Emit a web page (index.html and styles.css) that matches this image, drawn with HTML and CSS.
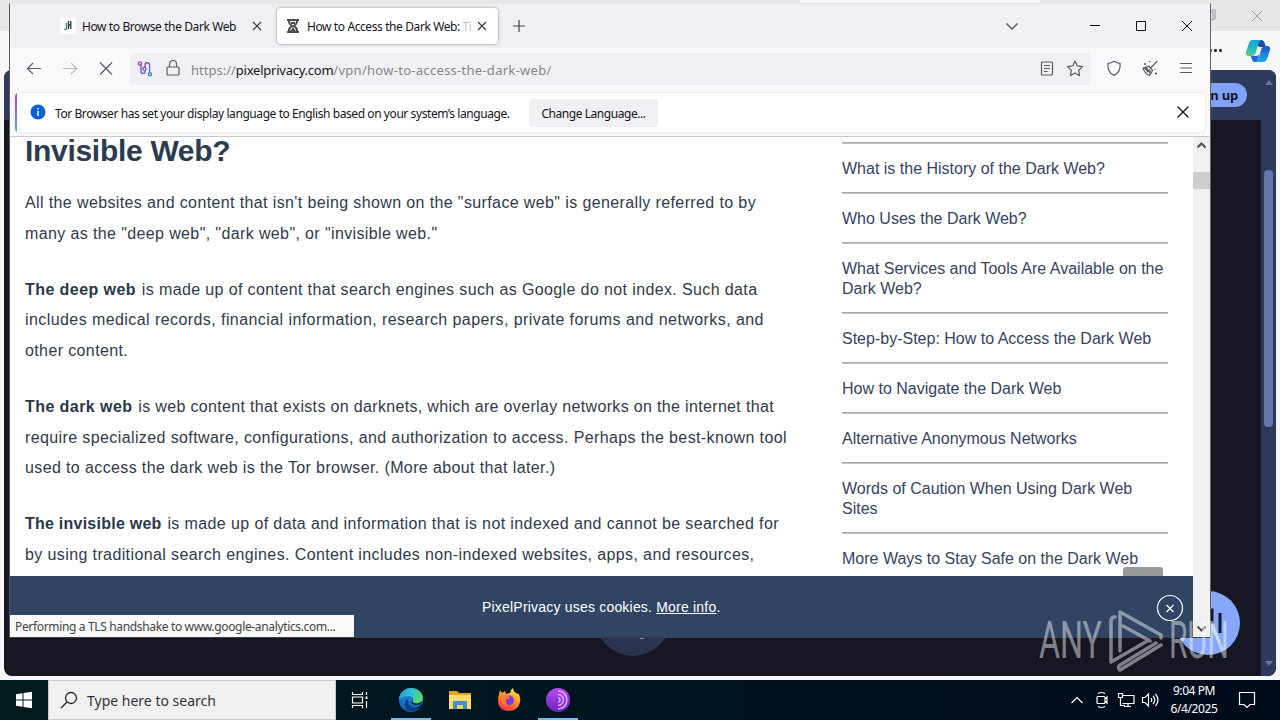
FILE: index.html
```html
<!DOCTYPE html>
<html lang="en">
<head>
<meta charset="utf-8">
<title>How to Access the Dark Web</title>
<link rel="stylesheet" href="styles.css">
</head>
<body>
<div class="desktop">
  <section class="edge">
    <div class="edge-title">
      <div class="edge-tab"></div>
      <svg class="edge-controls" width="70" height="31" viewBox="0 0 70 31" fill="none" stroke="#999"><path d="M1 12h7v8H1zM3 12v-2h7v9H8M47 11l10 10M57 11l-10 10"/></svg>
    </div>
    <div class="edge-tools">
      <span class="dots"></span>
      <svg width="26" height="26" viewBox="0 0 26 26">
        <defs>
          <linearGradient id="cp1" x1="0" y1="0" x2="0" y2="1"><stop offset="0" stop-color="#16a5e0"/><stop offset=".5" stop-color="#1fb9c8"/><stop offset="1" stop-color="#55cd78"/></linearGradient>
          <linearGradient id="cp2" x1="0" y1="0" x2="0" y2="1"><stop offset="0" stop-color="#2057c8"/><stop offset="1" stop-color="#19aaf0"/></linearGradient>
        </defs>
        <path d="M9 2h7q3 0 4 4l1 3h-7l-3-4z" fill="#1b4aa8"/>
        <path d="M8 2h8q-2 1-3 5l-2 7q-1 4-4 4H4q-4 0-3-4l3-9q1-3 4-3z" fill="url(#cp1)"/>
        <path d="M18 24h-8q3-1 4-5l2-7q1-4 4-4h2q4 0 3 4l-3 9q-1 3-4 3z" fill="url(#cp2)"/>
        <path d="M6 18h5l3-1q-1 7-4 7-3 0-4-6z" fill="#1769d8"/>
      </svg>
    </div>
    <div class="edge-page">
      <div class="edge-header"><span class="signup">Sign up</span></div>
      <div class="edge-scroll"><i class="tri up"></i><i class="thumb"></i><i class="tri down"></i></div>
      <div class="orb"></div>
      <div class="chat">
        <svg width="64" height="64" viewBox="0 0 64 64" fill="none" stroke="#151726" stroke-width="3"><path d="M31 19h5v12h-5M44 22v20"/><path d="M35 34l9 18" stroke="#a8c0fb"/></svg>
      </div>
    </div>
  </section>

  <section class="tor">
    <div class="tabs">
      <div class="tab">
        <svg class="fav" width="16" height="16" viewBox="0 0 16 16" fill="none"><rect width="16" height="16" fill="#fff"/><path d="M6.500 5v5q0 2-2 1" stroke="#3da06a" stroke-width="1.600"/><path d="M8.500 3v8M10.800 3v8M8 7h3" stroke="#28344a" stroke-width="1.300"/></svg>
        <span class="label">How to Browse the Dark Web</span>
        <svg class="x" width="10" height="10" viewBox="0 0 10 10"><path d="M1 1l8 8M9 1L1 9"/></svg>
      </div>
      <div class="tab active">
        <svg class="fav" width="14" height="16" viewBox="0 0 14 16" fill="none" stroke="#4b4b4f" stroke-width="2"><path d="M1 2h12M1 14h12M3 2v2q0 2 3 4-3 2-3 4v2M11 2v2q0 2-3 4 3 2 3 4v2"/><path d="M4.500 12.500h5M7 9.500v3M5 5h4"/></svg>
        <span class="label">How to Access the Dark Web: <em>Ti</em></span>
        <svg class="x" width="10" height="10" viewBox="0 0 10 10"><path d="M1 1l8 8M9 1L1 9"/></svg>
      </div>
      <svg class="plus" width="14" height="14" viewBox="0 0 14 14"><path d="M7 1v12M1 7h12"/></svg>
      <div class="win">
        <svg width="12" height="12" viewBox="0 0 12 12"><path d="M.5 3.500L6 9l5.500-5.500"/></svg>
        <svg width="12" height="12" viewBox="0 0 12 12"><path d="M1 5.500h10"/></svg>
        <svg width="12" height="12" viewBox="0 0 12 12"><path d="M1.500 1.500h9v9h-9z"/></svg>
        <svg width="12" height="12" viewBox="0 0 12 12"><path d="M1 1l10 10M11 1L1 11"/></svg>
      </div>
    </div>

    <div class="toolbar">
      <div class="nav">
        <svg width="16" height="16" viewBox="0 0 16 16"><path d="M15 7.500H2M7 2L1.500 7.500 7 13"/></svg>
        <svg class="off" width="16" height="16" viewBox="0 0 16 16"><path d="M1 7.500h13M9 2l5.500 5.500L9 13"/></svg>
        <svg width="16" height="16" viewBox="0 0 16 16"><path d="M2 1.500l12 12M14 1.500l-12 12"/></svg>
      </div>
      <div class="url">
        <svg width="16" height="16" viewBox="0 0 16 16">
          <defs><linearGradient id="circuit" gradientUnits="userSpaceOnUse" x1="2" y1="1" x2="14" y2="15"><stop offset="0" stop-color="#a83cd0"/><stop offset=".55" stop-color="#6a5cc8"/><stop offset="1" stop-color="#3a8fd0"/></linearGradient></defs>
          <g stroke="url(#circuit)" stroke-width="1.400"><path d="M4 4v6.500a2 2 0 0 0 4 0V9.500M8 6V4a2.300 2.300 0 0 1 4.600 0v8"/><circle cx="3" cy="2.500" r="1.600"/><circle cx="7.500" cy="7.800" r="1.600"/><circle cx="13" cy="13.300" r="1.600"/></g>
        </svg>
        <svg class="lock" width="14" height="18" viewBox="0 0 14 18"><path d="M2 8h10q1 0 1 1v6q0 1-1 1H2q-1 0-1-1V9q0-1 1-1zM3.500 8V5a3.500 3.500 0 0 1 7 0v3"/></svg>
        <span class="address"><span class="proto">https://</span><b>pixelprivacy.com</b><span class="path">/vpn/how-to-access-the-dark-web/</span></span>
        <svg class="reader" width="14" height="16" viewBox="0 0 14 16"><path d="M2.500 1h9q1 0 1 1v11q0 1-1 1h-9q-1 0-1-1V2q0-1 1-1zM4 4.500h6M4 7.500h6M4 10.500h3.500"/></svg>
        <svg class="star" width="18" height="18" viewBox="0 0 18 18"><path stroke-linejoin="round" d="M9 1l2.300 4.900 5.200.7-3.800 3.700.9 5.400L9 13.100l-4.600 2.600.9-5.400L1.500 6.600l5.200-.7z"/></svg>
      </div>
      <svg class="shield" width="16" height="18" viewBox="0 0 16 18"><path d="M8 1.200q3 1.800 6 2.200c.7 5-1.300 9.800-6 12-4.700-2.200-6.700-7-6-12q3-.4 6-2.200z"/></svg>
      <svg class="broom" width="16" height="16" viewBox="0 0 16 16"><path d="M15.500 0L9 6.500M6.500 5l4 4M6.500 5Q4.500 7 1 7 2 12 7.500 14.500q2.500-2.500 3-5.500M3.500 8.500l2-1M5 11l3-2.500M7.500 12.500l1-3"/><path d="M4 5.500l3 4 2 3-4-2-3-3z" fill="#5b5b66" stroke="none"/><path d="M2 3h2M3 2v2M7 .7h1.500M13 12.500h2M14 11.500v2M12.500 8.500h1"/></svg>
      <svg class="menu" width="14" height="14" viewBox="0 0 14 14"><path d="M1 1.500h12M1 6h12M1 10.500h12"/></svg>
    </div>

    <div class="notice-wrap">
      <div class="notice">
        <svg class="info" width="16" height="16" viewBox="0 0 16 16"><circle cx="8" cy="8" r="7.500" fill="#0560df"/><path d="M8 4v1.600M8 7v5" stroke="#fff" stroke-width="1.500"/></svg>
        <span class="message">Tor Browser has set your display language to English based on your system’s language.</span>
        <span class="button">Change Language...</span>
        <svg class="close" width="12" height="12" viewBox="0 0 12 12" stroke="#111" stroke-width="1.300"><path d="M.5.500l11 11M11.500.500l-11 11"/></svg>
      </div>
    </div>

    <div class="content">
      <article>
        <h2>Invisible Web?</h2>
        <p>All the websites and content that isn't being shown on the "surface web" is generally referred to by<br>many as the "deep web", "dark web", or "invisible web."</p>
        <p><strong>The deep web</strong> is made up of content that search engines such as Google do not index. Such data<br><span class="wide">includes medical records, financial information, research papers, private forums and networks, and</span><br>other content.</p>
        <p><strong>The dark web</strong> <span class="narrow">is web content that exists on darknets, which are overlay networks on the internet that</span><br><span class="mid">require specialized software, configurations, and authorization to access. Perhaps the best-known tool</span><br>used to access the dark web is the Tor browser. (More about that later.)</p>
        <p><strong class="tight">The invisible web</strong> <span class="mid">is made up of data and information that is not indexed and cannot be searched for<br>by using traditional search engines. Content includes non-indexed websites, apps, and resources,</span></p>
      </article>
      <ul class="toc">
        <li>What is the History of the Dark Web?</li>
        <li>Who Uses the Dark Web?</li>
        <li>What Services and Tools Are Available on the<br>Dark Web?</li>
        <li>Step-by-Step: How to Access the Dark Web</li>
        <li>How to Navigate the Dark Web</li>
        <li>Alternative Anonymous Networks</li>
        <li>Words of Caution When Using Dark Web<br>Sites</li>
        <li>More Ways to Stay Safe on the Dark Web</li>
      </ul>
      <div class="scrollbar">
        <svg width="17" height="16" viewBox="0 0 17 16"><path d="M4.500 10.500l4-4 4 4"/></svg>
        <i></i>
        <svg class="end" width="17" height="16" viewBox="0 0 17 16"><path d="M4.500 5.500l4 4 4-4"/></svg>
      </div>
      <div class="totop"></div>
      <div class="cookies">
        <span class="consent">PixelPrivacy uses cookies. <u>More info</u>.</span>
        <svg width="28" height="28" viewBox="0 0 28 28" fill="none" stroke="#fff" stroke-width="1.200"><circle cx="14" cy="14" r="12.500"/><path d="M10.500 11l7 7M17.500 11l-7 7"/></svg>
      </div>
      <div class="status">Performing a TLS handshake to www.google-analytics.com...</div>
    </div>
  </section>

  <div class="watermark">
    <span class="any">ANY</span>
    <svg width="56" height="64" viewBox="0 0 56 64" fill="none" stroke="#fff" stroke-width="3.500" stroke-linejoin="round" stroke-linecap="round"><path d="M7 8Q3 8 3 12V53L41 31M12 42V3L53 26M15 17L42 32M53 26v3M12 61L53 36M12 61q-3-3 0-5L48 34"/></svg>
    <span class="run">RUN</span>
  </div>

  <footer class="taskbar">
    <svg class="start" width="48" height="40" viewBox="0 0 48 40" fill="#fff"><path d="M16 14.200l6.500-1v6.300H16zM23.500 13l8.500-1.200v7.700h-8.500zM16 20.500h6.500v6.300l-6.500-1zM23.500 20.500H32v7.700L23.500 27z"/></svg>
    <div class="search">
      <svg width="18" height="18" viewBox="0 0 18 18" fill="none" stroke="#222" stroke-width="1.300"><circle cx="11" cy="7" r="5.500"/><path d="M7 11l-6 6"/></svg>
      <span>Type here to search</span>
    </div>
    <div class="apps">
      <div class="app"><svg width="18" height="18" viewBox="0 0 18 18" fill="none" stroke="#fff" stroke-width="1.200"><path d="M1.500 1v2.500h10V1M1.500 17v-2.500h10V17M1.500 6h10v6h-10zM15.500 1v3M15.500 10v7"/><path d="M14.500 5.500h2v2.500h-2z" fill="#fff" stroke="none"/></svg></div>
      <div class="app open">
        <svg width="24" height="24" viewBox="0 0 24 24">
          <defs>
            <linearGradient id="eg1" x1="0" y1="0" x2="1" y2=".4"><stop offset="0" stop-color="#1c9fe0"/><stop offset=".6" stop-color="#35c4cf"/><stop offset="1" stop-color="#5bd66a"/></linearGradient>
            <linearGradient id="eg2" x1="0" y1="0" x2="0" y2="1"><stop offset="0" stop-color="#1d9be0"/><stop offset="1" stop-color="#0b5cae"/></linearGradient>
          </defs>
          <circle cx="12" cy="12" r="12" fill="url(#eg2)"/>
          <path d="M0 11C1 4 6 0 12 0c7 0 12 5 12 10 0 4-3 6-6 6-4 0-5-2-4-3 1-2 0-5-4-5-4 0-8 1-10 3z" fill="url(#eg1)"/>
          <path d="M9 11c-1 5 3 9 8 9 2 0 3 0 5-1-5 7-17 5-16-3 0-3 1-4 3-5z" fill="#123f86"/>
          <path d="M24 12c-1 3-4 5-7 5-4 0-5-3-4-4 1 3 7 4 11-1zM22 19q-3 2-7 1 5 0 9-6z" fill="#001722"/>
        </svg>
      </div>
      <div class="app"><svg width="22" height="18" viewBox="0 0 22 18"><path d="M0 0h8l2 2h12v16H0z" fill="#e9a223"/><path d="M0 4h22v14H0z" fill="#fddc6c"/><path d="M4 18v-8h14v8h-4v-4H8v4z" fill="#3d91cf"/><path d="M8 14h6v4H8z" fill="#f5cf5c"/></svg></div>
      <div class="app">
        <svg width="24" height="24" viewBox="0 0 24 24">
          <defs><linearGradient id="ff" x1=".8" y1="0" x2=".3" y2="1"><stop offset="0" stop-color="#fff04a"/><stop offset=".45" stop-color="#ff9a25"/><stop offset="1" stop-color="#f5304d"/></linearGradient></defs>
          <path d="M2 6l1-4 2 3 3-2 1 3q3-1 4-1 0-3 3-5 0 3 3 5l2 1v-1q3 4 2 9c-1 6-6 9-11 9S1 20 1 13q0-4 1-7z" fill="url(#ff)"/>
          <circle cx="12" cy="12.500" r="5" fill="#7a3bd8"/><path d="M4 8q4-2 7 0l2 2q-3 1-4 2-1 4 3 5-6 1-8-4z" fill="#ff7a2c"/>
        </svg>
      </div>
      <div class="app open">
        <svg width="24" height="24" viewBox="0 0 24 24" fill="none">
          <defs><linearGradient id="tb" x1="0" y1="0" x2="0" y2="1"><stop offset="0" stop-color="#b94bf5"/><stop offset="1" stop-color="#6a22b8"/></linearGradient></defs>
          <circle cx="12" cy="12" r="12" fill="url(#tb)"/><path d="M12 3a9 9 0 0 1 0 18M12 6.500a5.500 5.500 0 0 1 0 11M12 10a2 2 0 0 1 0 4" stroke="#dcaaf8" stroke-width="1.500"/>
        </svg>
      </div>
    </div>
    <div class="tray">
      <svg width="14" height="10" viewBox="0 0 14 10"><path d="M1.500 8L7 2.500 12.500 8"/></svg>
      <svg class="meet" width="14" height="18" viewBox="0 0 14 18"><path d="M3 5.500h6q1 0 1 1v5q0 1-1 1H3q-1 0-1-1v-5q0-1 1-1zM10 8l2-2v6l-2-2M3 2.500q3.500-2 7 0M3 15.500q3.500 2 7 0"/></svg>
      <svg class="net" width="18" height="16" viewBox="0 0 18 16"><path d="M5 3.500h12v8H5.500M1.500 1.500h4v4h-4zM3.500 5.500v8H8M11 11.500v3M7 14.500h7"/></svg>
      <svg class="vol" width="18" height="16" viewBox="0 0 18 16"><path d="M1.500 5.500h2.500l3.500-3.500v12l-3.500-3.500H1.500zM10 6q1.500 2 0 4M12 4q3.500 4 0 8M14.500 2q5 6 0 12"/></svg>
      <div class="clock"><span>9:04 PM</span><span>6/4/2025</span></div>
      <svg class="action" width="18" height="18" viewBox="0 0 18 18"><path d="M1.500 1.500h15v12H12L9 16.500 6 13.500H1.500z"/></svg>
    </div>
  </footer>
</div>
</body>
</html>
```
FILE: styles.css
```css
* { box-sizing: border-box; }
body { margin: 0; }
svg { display: block; flex: none; }
.desktop {
  position: relative;
  width: 1280px;
  height: 720px;
  overflow: hidden;
  background: #f5f7f9;
  font-family: "Noto Sans", "Open Sans", sans-serif;
  font-size: 12px;
  color: #15141a;
  white-space: nowrap;
}

/* Edge window behind */
.edge { position: absolute; inset: 0 0 40px 0; display: flex; flex-direction: column; background: #f7f7f7; }
.edge-title { height: 31px; background: #e6e6e6; display: flex; justify-content: space-between; flex: none; }
.edge-tab { width: 240px; margin-left: 800px; height: 31px; background: #f7f7f7; }
.edge-controls { margin-right: 5px; }
.edge-tools { height: 39px; flex: none; display: flex; justify-content: flex-end; align-items: center; gap: 22px; padding-right: 9px; }
.dots { width: 15px; height: 3px; background: radial-gradient(circle, #222 1.300px, transparent 1.600px) 0 0 / 5px 3px; }
.edge-page { position: relative; width: 1272px; height: 606px; margin-left: 4px; background: #171723; border-radius: 8px; overflow: hidden; }
.edge-header { height: 50px; background: #2d3c5c; display: flex; justify-content: flex-end; align-items: center; padding-right: 29px; }
.signup { width: 90px; height: 24px; border-radius: 12px; background: #80a2f8; color: #10142a; font-size: 13px; line-height: 24px; font-weight: 700; letter-spacing: -.2px; text-align: right; padding-right: 9px; }
.edge-scroll { position: absolute; right: 0; top: 0; width: 15px; height: 606px; background: #2c3a5b; display: flex; flex-direction: column; align-items: center; padding: 10px 0; }
.tri { border: 4.500px solid transparent; border-top: 0; border-bottom: 5px solid #6477a0; }
.tri.down { border-bottom: 0; border-top: 5px solid #6477a0; margin-top: auto; }
.thumb { width: 9px; height: 257px; margin-top: 85px; border-radius: 4px; background: #6377aa; }
.orb { position: absolute; left: 591px; top: 510px; width: 76px; height: 76px; border-radius: 50%; background: linear-gradient(#8b92a6, #8b92a6) 45px 57px / 4px 2px no-repeat #2a3350; }
.chat { position: absolute; left: 1172px; top: 521px; width: 64px; height: 64px; border-radius: 50%; background: #86a7fb; }

/* Tor Browser window */
.tor { position: absolute; left: 9px; top: 3px; width: 1202px; height: 635px; border: 1px solid #606065; border-top-color: #e6e6e8; border-bottom-color: #3a3f4c; border-left-color: #55565e; background: #f9f9fb; display: flex; flex-direction: column; }
.tabs { height: 44px; background: #f0f0f4; display: flex; align-items: center; padding-left: 42px; flex: none; }
.tab { width: 219px; height: 36px; display: flex; align-items: center; padding: 0 9px 0 8px; border-radius: 4px; }
.tab.active { width: 221px; margin-left: 6px; padding: 0 11px 0 9px; background: #fff; box-shadow: 0 0 3px rgba(0,0,0,.45); }
.fav { margin-right: 6px; }
.active .fav { margin-right: 7px; }
.label { letter-spacing: -.4px; flex: 1; overflow: hidden; padding-top: 1px; }
.label em { font-style: normal; color: #c4c4c8; }
.x, .plus, .nav svg, .win svg, .toolbar > svg, .url svg { fill: none; stroke: #5b5b66; stroke-width: 1.200; }
.x { stroke: #333; stroke-width: 1.100; }
.plus { margin-left: 14px; stroke: #444; }
.win { margin-left: auto; display: flex; align-items: center; padding-right: 17px; gap: 34px; }
.win svg { stroke: #111; stroke-width: 1; }
.win svg:first-child { stroke: #5b5b66; stroke-width: 1.500; margin-right: 37px; }
.toolbar { height: 42px; display: flex; align-items: center; flex: none; padding-right: 17px; }
.nav { display: flex; gap: 20px; padding-left: 16px; width: 120px; }
.nav .off { opacity: .4; }
.url { width: 961px; height: 32px; background: #f0f0f4; border-radius: 4px; display: flex; align-items: center; padding: 0 7px; }
.lock { margin: -2px 11px 0 13px; }
.address { flex: 1; font-size: 13px; color: #85858c; padding-top: 1px; }
.address b { font-weight: 400; color: #15141a; letter-spacing: -.24px; }
.path { letter-spacing: .28px; }
.reader { margin-right: 12px; }
.toolbar .shield { margin-left: 15px; }
.toolbar .broom { margin-left: 20px; }
.toolbar .menu { margin-left: auto; }
.notice-wrap { height: 47px; padding: 3px 5px 5px; border-bottom: 1px solid #c8c8cc; flex: none; }
.notice { height: 39px; background: linear-gradient(#bd40cc, #8474cc 55%, #3fc0cf) 0 0 / 2px 100% no-repeat #fff; border-radius: 4px; box-shadow: 0 0 2px rgba(0,0,0,.2); display: flex; align-items: center; padding: 0 16px 0 15px; }
.info { margin-top: -1px; }
.message { width: 459px; margin-left: 9px; padding-top: 1px; letter-spacing: -.42px; }
.button { margin-left: 15px; width: 129px; height: 28px; border-radius: 4px; background: #f0f0f4; line-height: 29px; text-align: center; letter-spacing: -.45px; }
.close { margin: -1px 0 0 auto; }

/* Web page */
.content { position: relative; flex: 1; display: flex; overflow: hidden; background: #fff; font-family: "Liberation Sans", Arial, sans-serif; font-size: 16px; color: #303a4a; }
article { width: 832px; padding-left: 15px; }
h2 { margin: 0 0 24px; font-size: 30px; line-height: 27px; letter-spacing: -.3px; color: #2c3c50; }
p { margin: 0 0 25.500px; line-height: 30.600px; letter-spacing: .38px; }
strong { letter-spacing: .43px; color: #29374a; margin-right: 1px; }
.tight { letter-spacing: .24px; }
.mid { letter-spacing: .39px; }
.wide { letter-spacing: .425px; }
.narrow { letter-spacing: .335px; }
.toc { width: 326px; margin: 5px 0 0; padding: 0; list-style: none; color: #35435f; }
.toc li { padding: 16px 0 13px; line-height: 20px; border-top: 1px solid #a8a8ac; box-shadow: inset 0 1px #c4c4c8; }
.scrollbar { width: 17px; height: 500px; margin-left: auto; background: #f0f0f0; display: flex; flex-direction: column; }
.scrollbar i { height: 17px; background: #cdcdcd; margin-top: 19px; }
.scrollbar svg { fill: none; stroke: #505050; stroke-width: 2; }
.scrollbar .end { margin-top: auto; }
.totop { position: absolute; left: 1113px; top: 430px; width: 40px; height: 20px; border-radius: 3px; background: #999; }
.cookies { position: absolute; left: 0; top: 439px; width: 1183px; height: 61px; background: #304463; color: #fff; font-size: 14px; letter-spacing: .2px; display: flex; align-items: center; justify-content: space-between; padding: 2px 9px 0 472px; }
.consent { padding-bottom: 2px; }
.status { position: absolute; left: 0; top: 478px; width: 344px; height: 22px; background: #f9f9fb; color: #444; font: 12px/24px "Noto Sans", sans-serif; letter-spacing: -.345px; padding-left: 5px; }

/* Recorder watermark */
.watermark { position: absolute; left: 1039px; top: 609px; width: 194px; height: 64px; display: flex; align-items: center; opacity: .45; color: #fff; font: 400 52px/64px Roboto, "Liberation Sans", sans-serif; }
.any, .run { display: block; transform-origin: 0 50%; }
.any { width: 69px; transform: scaleX(.62); }
.run { width: 60px; margin-left: 5px; transform: scaleX(.58); }

/* Taskbar */
.taskbar { position: absolute; left: 0; top: 680px; width: 1280px; height: 40px; display: flex; background: linear-gradient(90deg, #001a22, #001420 50%, #000b1c); }
.search { width: 288px; background: #f0f0f0; border: 1px solid #c8c8c8; display: flex; align-items: center; padding-left: 11px; gap: 9px; font-size: 14px; color: #333; }
.apps { display: flex; }
.app { width: 48px; display: flex; align-items: center; justify-content: center; }
.app + .app { width: 49px; padding-left: 1px; }
.app:nth-child(2) { margin-left: 2px; }
.app.open { background: linear-gradient(#76b9ed, #76b9ed) 50% 100% / 40px 2px no-repeat; }
.tray { margin-left: auto; display: flex; align-items: center; padding-right: 24px; color: #fff; }
.tray svg { fill: none; stroke: #fff; stroke-width: 1.200; }
.meet { margin-left: 11px; }
.net { margin-left: 8px; }
.vol { margin-left: 6px; }
.clock { width: 54px; margin: 0 17px 0 8px; display: flex; flex-direction: column; align-items: center; line-height: 18px; letter-spacing: -.42px; }
```
